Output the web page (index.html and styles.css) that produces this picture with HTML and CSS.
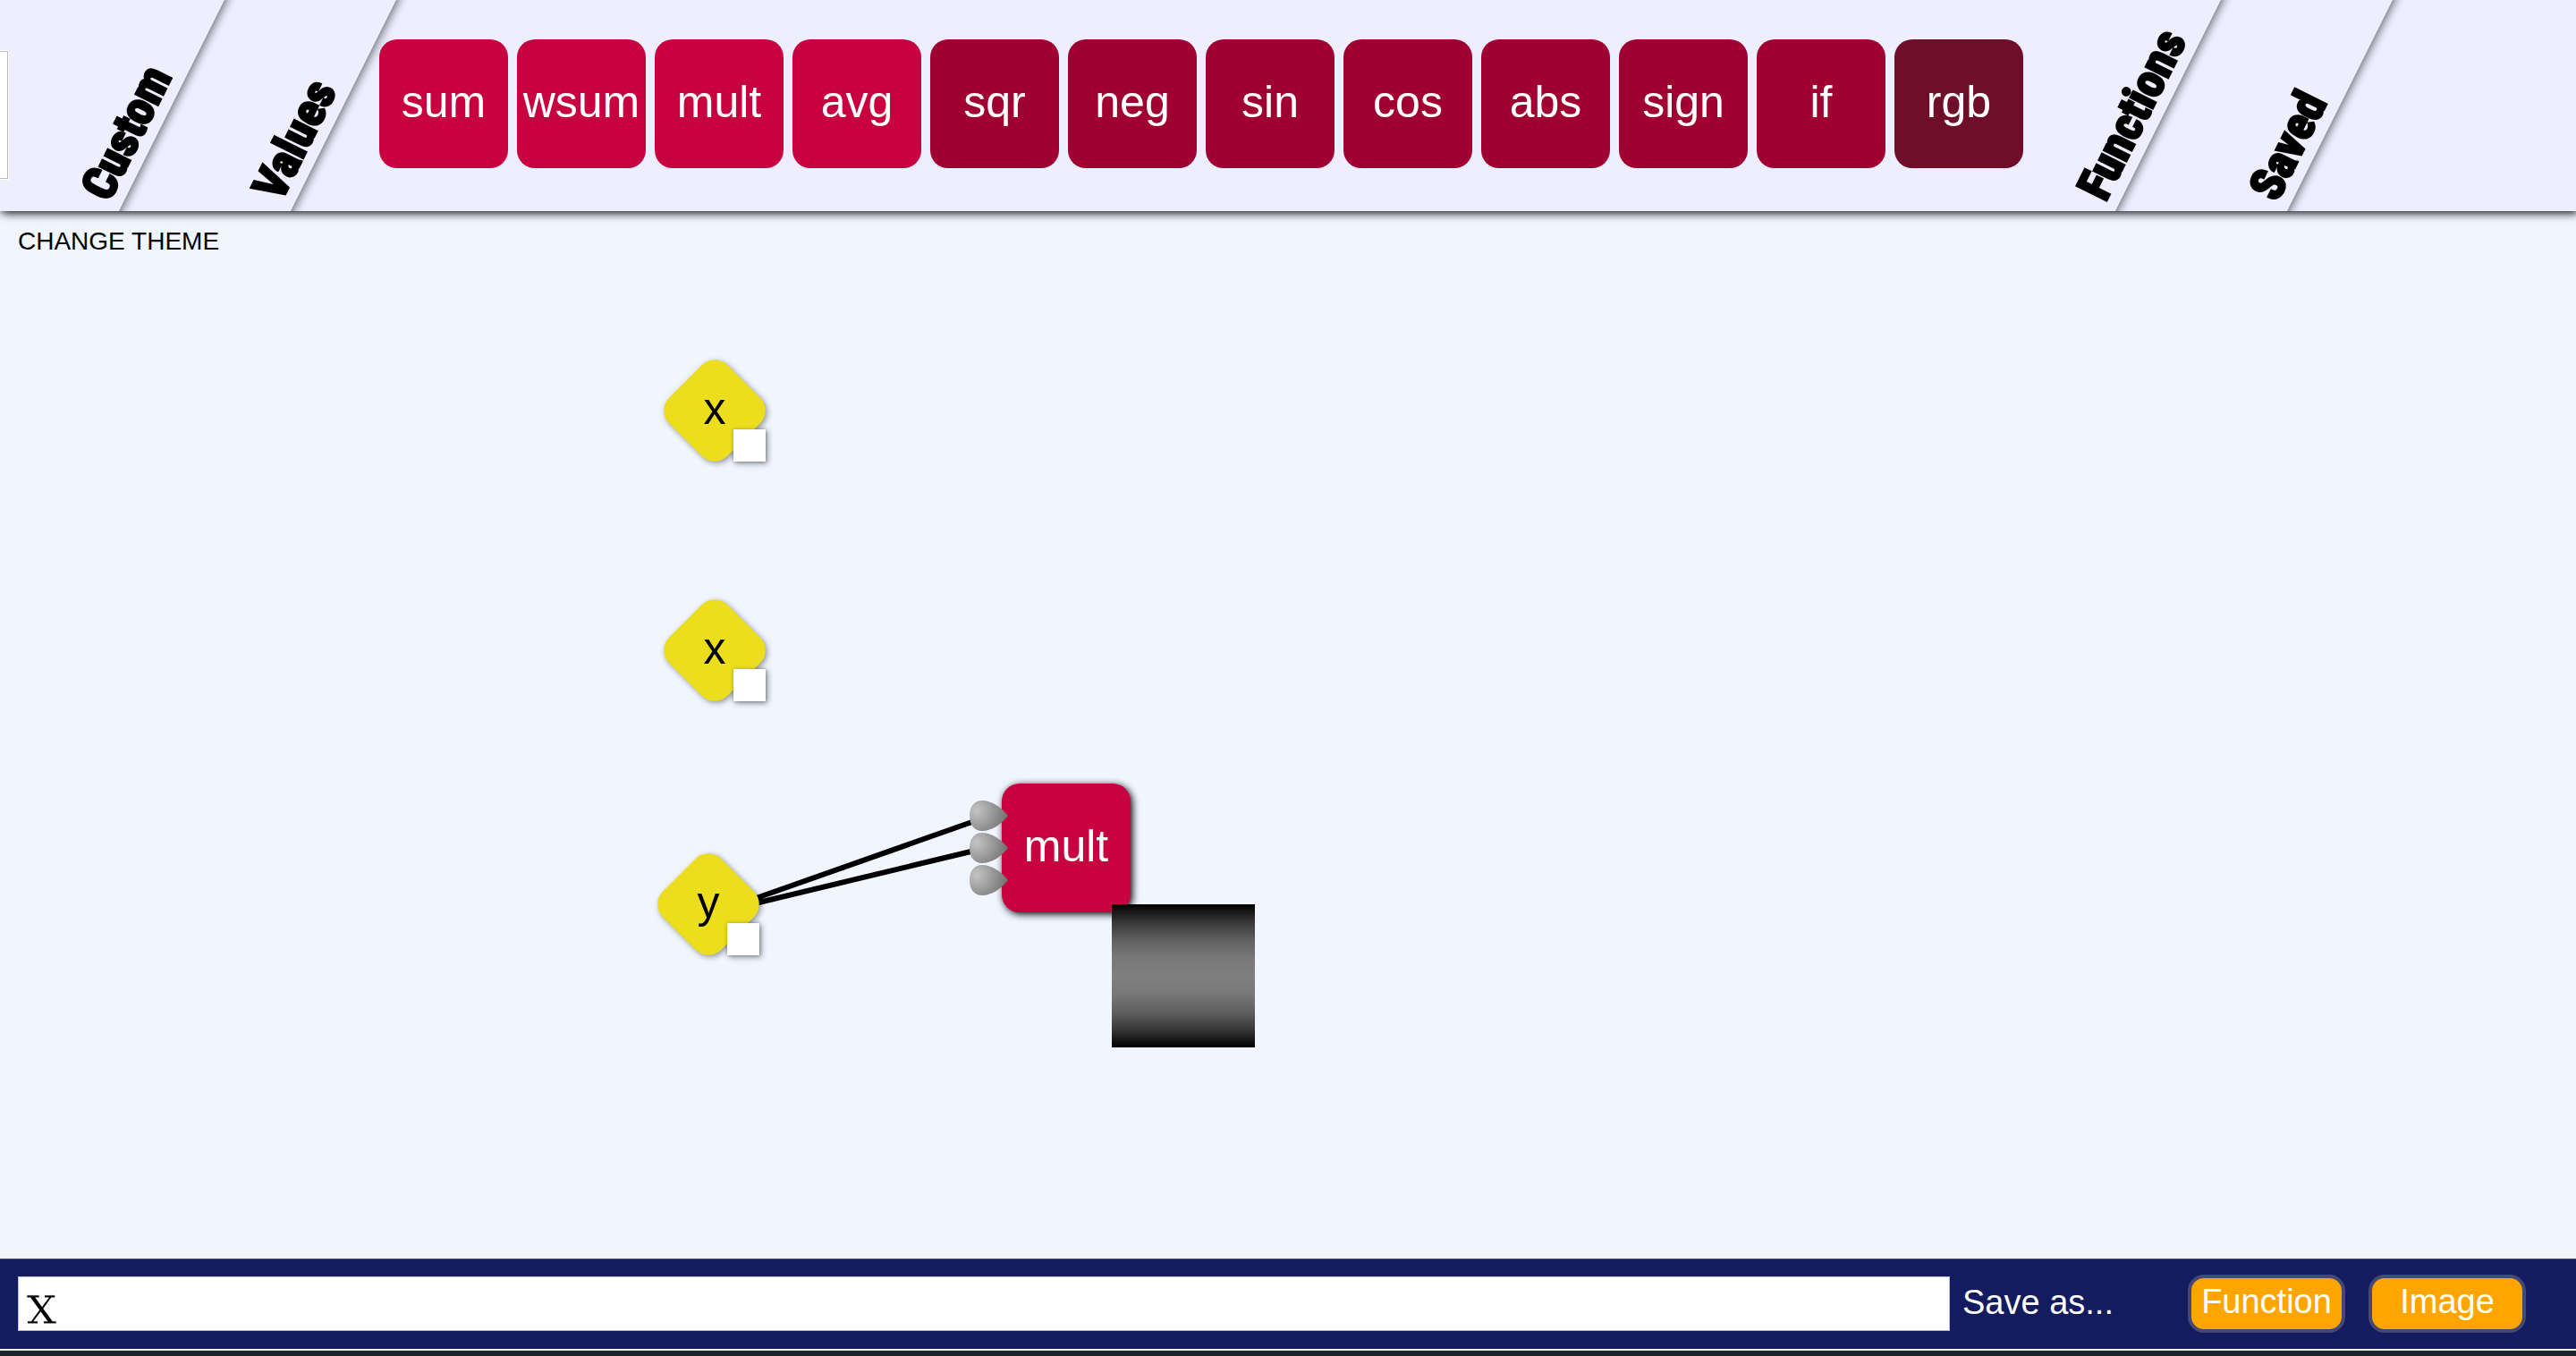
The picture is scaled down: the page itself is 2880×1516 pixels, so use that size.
FILE: index.html
```html
<!DOCTYPE html>
<html lang="en">
<head>
<meta charset="utf-8">
<title>Function Builder</title>
<link rel="stylesheet" href="styles.css">
</head>
<body>
<header class="toolbar">
  <div class="drawers">
    <section class="drawer drawer-custom">
      <div class="custom-card"></div>
      <h2 class="drawer-label">Custom</h2>
    </section>
    <section class="drawer drawer-values">
      <h2 class="drawer-label">Values</h2>
    </section>
    <section class="drawer drawer-functions">
      <div class="palette">
        <button class="tile">sum</button>
        <button class="tile">wsum</button>
        <button class="tile">mult</button>
        <button class="tile">avg</button>
        <button class="tile unary">sqr</button>
        <button class="tile unary">neg</button>
        <button class="tile unary">sin</button>
        <button class="tile unary">cos</button>
        <button class="tile unary">abs</button>
        <button class="tile unary">sign</button>
        <button class="tile unary">if</button>
        <button class="tile color">rgb</button>
      </div>
      <h2 class="drawer-label">Functions</h2>
    </section>
    <section class="drawer drawer-saved">
      <h2 class="drawer-label">Saved</h2>
    </section>
  </div>
</header>

<main class="board">
  <button class="theme">CHANGE THEME</button>
  <svg class="links" aria-hidden="true">
    <path d="M840 770L1098 679M840 775L1098 713" stroke="#000" stroke-width="6" fill="none"/>
  </svg>

  <div class="value value-x1"><span class="value-name">x</span><span class="thumb"></span></div>
  <div class="value value-x2"><span class="value-name">x</span><span class="thumb"></span></div>
  <div class="value value-y"><span class="value-name">y</span><span class="thumb"></span></div>

  <div class="tile function-node">mult
    <svg class="inlets" width="44" height="108" viewBox="0 0 44 108" aria-hidden="true">
      <defs>
        <radialGradient id="metal" gradientUnits="userSpaceOnUse" cx="8" cy="12" r="34">
          <stop offset="0" stop-color="#c4c4c4"/>
          <stop offset="1" stop-color="#747474"/>
        </radialGradient>
        <path id="drop" d="M0 18C0 8 5 1 14 1C25 1 36 9 43 18C36 27 25 35 14 35C5 35 0 28 0 18Z" fill="url(#metal)"/>
      </defs>
      <use href="#drop"/>
      <use href="#drop" y="36"/>
      <use href="#drop" y="72"/>
    </svg>
    <span class="preview"></span>
  </div>
</main>

<footer class="bottom-bar">
  <input class="formula" type="text" value="x" aria-label="Formula">
  <span class="save-label">Save as...</span>
  <div class="save-buttons">
    <button class="save">Function</button>
    <button class="save">Image</button>
  </div>
</footer>
</body>
</html>
```
FILE: styles.css
```css
* { box-sizing: border-box; }

body {
  margin: 0;
  min-height: 100vh;
  padding-bottom: 6px;
  display: flex;
  flex-direction: column;
  background: #19252b;
  font-family: "Liberation Sans", Arial, sans-serif;
}

button {
  border: 0;
  padding: 0;
  font-family: inherit;
  cursor: pointer;
}

/* Toolbar with slanted drawers */
.toolbar {
  position: relative;
  z-index: 2;
  background: #eef;
  box-shadow: 2px 2px 10px #000;
}

.drawers {
  display: flex;
  height: 236px;
  overflow: hidden;
}

.drawer {
  position: relative;
  flex: 0 0 192px;
  display: flex;
  align-items: center;
}

.drawer::before {
  content: "";
  position: absolute;
  inset: -10px 0;
  background: #eef;
  box-shadow: 2px 2px 10px rgba(0, 0, 0, 0.6);
  transform: skewX(-26.565deg);
}

.drawer-custom { z-index: 4; }
.drawer-values { z-index: 3; }
.drawer-functions { z-index: 2; flex: 0 1 2040px; }
.drawer-saved { z-index: 1; }

.drawer-custom::before { left: -100px; }

.drawer-label {
  position: absolute;
  right: 64px;
  bottom: 6px;
  width: 0;
  margin: 0;
  font: bold 52px/48px Impact, "Roboto Condensed", "Open Sans Condensed", "Liberation Sans", sans-serif;
  -webkit-text-stroke: 3px #000;
  white-space: nowrap;
  transform: rotate(-63.435deg);
  transform-origin: 0 100%;
}

.custom-card {
  position: relative;
  width: 9px;
  height: 143px;
  margin-top: 20px;
  background: #fff;
  border: solid #bbb;
  border-width: 1px 1px 1px 0;
  outline: 1px solid #fff;
}

.palette {
  position: relative;
  display: flex;
  gap: 10px;
  margin-left: 40px;
  margin-bottom: 4px;
}

.tile {
  display: flex;
  align-items: center;
  justify-content: center;
  width: 144px;
  height: 144px;
  padding-bottom: 4px;
  border-radius: 20px;
  background: #c80240;
  color: #fff;
  font-size: 50px;
}

.tile.unary { background: #a00032; }
.tile.color { background: #6e0e28; }

/* Board */
.board {
  position: relative;
  flex: 1;
  min-height: 960px;
  background: #f0f5ff;
}

.theme {
  margin: 18px 20px;
  background: none;
  color: #000;
  font-size: 28px;
  line-height: 32px;
}

.links {
  position: absolute;
  inset: 0;
  width: 100%;
  height: 100%;
}

.value {
  position: absolute;
  width: 114px;
  height: 114px;
  display: flex;
  align-items: center;
  justify-content: center;
  padding-bottom: 4px;
  font-size: 50px;
  filter: drop-shadow(2px 2px 3px rgba(0, 0, 0, 0.4));
}

.value::before {
  content: "";
  position: absolute;
  inset: 11px;
  border-radius: 20px;
  background: #ecde1c;
  transform: rotate(45deg);
}

.value-x1 { left: 742px; top: 166px; }
.value-x2 { left: 742px; top: 434px; }
.value-y { left: 735px; top: 718px; }

.value-name { position: relative; }

.thumb {
  position: absolute;
  right: 0;
  bottom: 0;
  width: 36px;
  height: 36px;
  background: #fff;
  box-shadow: 0 0 4px rgba(0, 0, 0, 0.3);
}

.function-node {
  position: absolute;
  left: 1120px;
  top: 640px;
  box-shadow: 2px 2px 8px #000;
}

.inlets {
  position: absolute;
  left: -36px;
  top: 18px;
}

.preview {
  position: absolute;
  left: 123px;
  top: 135px;
  width: 160px;
  height: 160px;
  background: linear-gradient(#000, #383838 12.5%, #606060 25%, #787878 37.5%, #808080 50%, #787878 62.5%, #606060 75%, #383838 87.5%, #000);
}

/* Bottom bar */
.bottom-bar {
  display: flex;
  align-items: center;
  height: 103px;
  padding: 0 56px 2px 20px;
  border-top: 1px solid #4a5285;
  border-bottom: 2px solid #f0f5ff;
  background: #121c5e;
  color: #fff;
  font-size: 38px;
}

.formula {
  flex: 1;
  min-width: 0;
  height: 61px;
  padding: 2px 8px 0;
  border: 1px solid #b8bcd4;
  background: #fff;
  color: #000;
  font: 62px/54px "DejaVu Serif", serif;
  -webkit-text-stroke: 1px #fff;
}

.save-label {
  width: 266px;
  padding: 0 0 2px 14px;
}

.save-buttons {
  display: flex;
  gap: 26px;
}

.save {
  width: 176px;
  height: 65px;
  padding-bottom: 4px;
  border: 4px solid #454875;
  border-radius: 18px;
  background: #ffa500;
  color: #fff;
  font-size: 38px;
}
```
